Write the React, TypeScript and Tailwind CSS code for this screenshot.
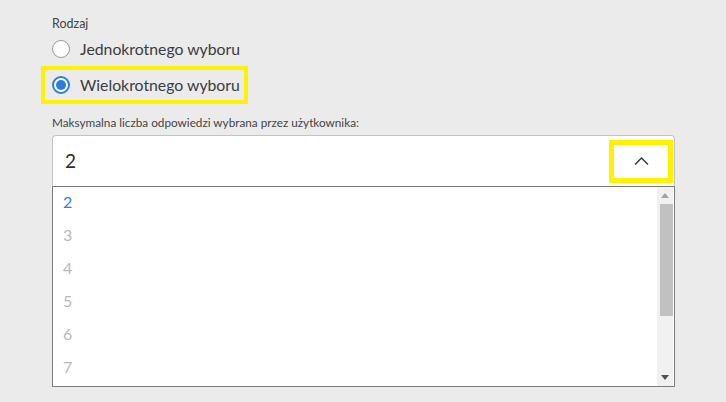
import React from 'react';

const font = { fontFamily: 'Lato, "Open Sans", sans-serif' };

function Radio({ checked }: { checked?: boolean }) {
  return checked ? (
    <span className="flex h-[18px] w-[18px] shrink-0 items-center justify-center rounded-full border-2 border-[#2a7de1] bg-white">
      <span className="h-[10px] w-[10px] rounded-full bg-[#2a7de1]" />
    </span>
  ) : (
    <span className="h-[18px] w-[18px] shrink-0 rounded-full border border-[#9a9a9a] bg-white" />
  );
}

function App() {
  const options = [2, 3, 4, 5, 6, 7];

  return (
    <div className="min-h-screen w-[726px] bg-[#ebebeb] pl-[52px] pt-[16px]" style={font}>
      <div className="h-[16px] text-[12.5px] leading-[16px] text-[#444]">Rodzaj</div>

      <label className="mt-[5px] flex h-[24px] items-center gap-[10px]">
        <Radio />
        <span className="text-[15.8px] text-[#3c3c3c]">Jednokrotnego wyboru</span>
      </label>

      <div className="mt-[5px] -ml-[11px] flex h-[38px] w-[207px] items-center gap-[10px] border-4 border-[#fff200] pl-[7px]">
        <Radio checked />
        <span className="text-[15.8px] text-[#3c3c3c]">Wielokrotnego wyboru</span>
      </div>

      <div className="mt-[11px] h-[16px] text-[11.75px] leading-[16px] text-[#444]">
        Maksymalna liczba odpowiedzi wybrana przez użytkownika:
      </div>

      <div className="mt-[4px] w-[623px]">
        <div className="flex h-[51px] items-center justify-between rounded-t-[4px] border border-b-0 border-[#c4c4c4] bg-white pl-[12px] pr-[1px]">
          <span className="text-[19px] text-[#2b2b2b]">2</span>
          <div className="flex h-[43px] w-[64px] items-center justify-center border-[5px] border-[#fff200]">
            <svg width="15" height="8" viewBox="0 0 15 8">
              <polyline points="1,7.5 7.5,1 14,7.5" fill="none" stroke="#333" strokeWidth="1.4" />
            </svg>
          </div>
        </div>

        <div className="flex h-[201px] border border-[#7c7c7c] bg-white">
          <div className="flex-1 overflow-hidden">
            <div className="-mt-[2px]">
              {options.map((n) => (
                <div
                  key={n}
                  className={`flex h-[33px] items-center pl-[10px] text-[16px] ${n === 2 ? 'text-[#2a7de1]' : 'text-[#b8b8b8]'}`}
                >
                  {n}
                </div>
              ))}
            </div>
          </div>
          <div className="mr-[1px] flex w-[16px] flex-col items-center bg-[#f1f1f1]">
            <div className="flex h-[17px] items-center justify-center">
              <svg width="8" height="5" viewBox="0 0 8 5">
                <polygon points="0,5 4,0 8,5" fill="#a3a3a3" />
              </svg>
            </div>
            <div className="ml-[2px] h-[112px] w-[13px] bg-[#c1c1c1]" />
            <div className="flex-1" />
            <div className="flex h-[17px] items-center justify-center">
              <svg width="8" height="5" viewBox="0 0 8 5">
                <polygon points="0,0 8,0 4,5" fill="#505050" />
              </svg>
            </div>
          </div>
        </div>
      </div>
    </div>
  );
}

export default App;
